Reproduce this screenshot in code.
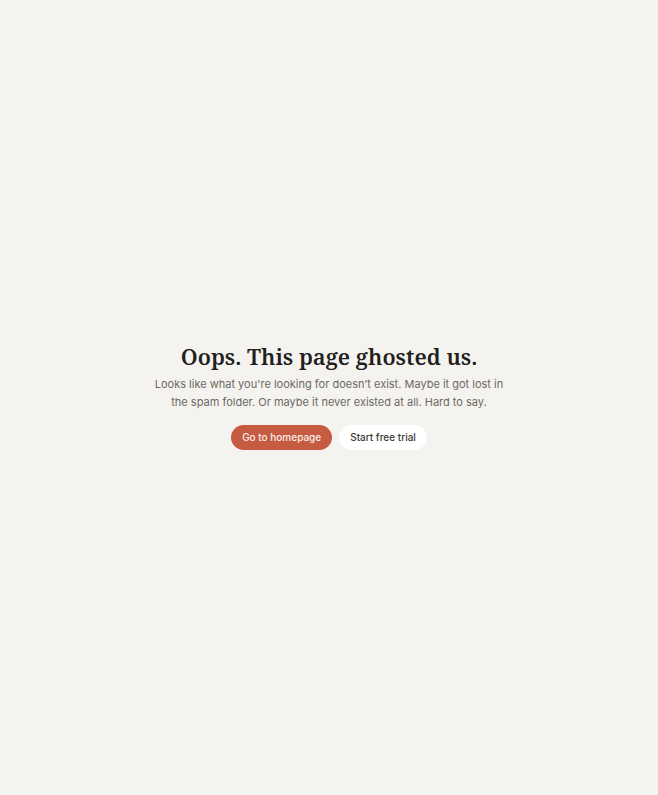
<template>
  <main class="page">
    <section class="message">
      <h1>Oops. This page ghosted us.</h1>
      <p>
        Looks like what you're looking for doesn’t exist. Maybe it got lost in
        the spam folder. Or maybe it never existed at all. Hard to say.
      </p>
      <div class="actions">
        <a class="btn primary" href="#home">Go to homepage</a>
        <a class="btn" href="#trial">Start free trial</a>
      </div>
    </section>
  </main>
</template>

<style>
body {
  background: #f5f3ef;
}
</style>

<style scoped>
.page {
  box-sizing: border-box;
  min-height: 100vh;
  padding-bottom: 4px;
  display: flex;
  align-items: center;
  justify-content: center;
  font-family: Inter, "Liberation Sans", sans-serif;
}
.message {
  max-width: 360px;
  text-align: center;
}
h1 {
  margin: 0 0 4px;
  font-family: "Noto Serif", "Droid Serif", "DejaVu Serif", serif;
  font-size: 22px;
  font-weight: 600;
  line-height: 30px;
  color: #21201c;
}
p {
  margin: 0 0 14px;
  font-size: 11px;
  line-height: 18px;
  color: #6b6963;
}
.actions {
  display: flex;
  justify-content: center;
  gap: 7px;
}
.btn {
  padding: 0 11px;
  border-radius: 13px;
  background: #fff;
  color: #3b3a34;
  font-size: 10px;
  font-weight: 500;
  line-height: 25px;
  text-decoration: none;
}
.btn.primary {
  background: #c65b41;
  color: #fbeee9;
}
</style>
